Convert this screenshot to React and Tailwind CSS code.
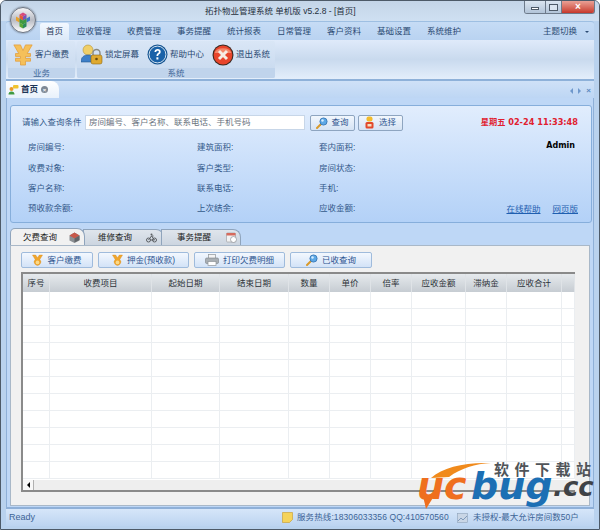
import React from 'react';

const font = { fontFamily: '"Liberation Sans", "Noto Sans CJK SC", sans-serif' };

const menus = ['应收管理', '收费管理', '事务提醒', '统计报表', '日常管理', '客户资料', '基础设置', '系统维护'];

const columns = [
  ['序号', 'w-[27px]'], ['收费项目', 'w-[102px]'], ['起始日期', 'w-[68px]'], ['结束日期', 'w-[69px]'],
  ['数量', 'w-[41px]'], ['单价', 'w-[41px]'], ['倍率', 'w-[41px]'], ['应收金额', 'w-[54px]'],
  ['滞纳金', 'w-[41px]'], ['应收合计', 'w-[55px]'], ['', 'w-[13px]'],
];

const info = [
  ['房间编号:', '建筑面积:', '套内面积:', 'h-[22px]'],
  ['收费对象:', '客户类型:', '房间状态:', 'h-[20px]'],
  ['客户名称:', '联系电话:', '手机:', 'h-[20px]'],
  ['预收款余额:', '上次结余:', '应收金额:', 'h-[20px]'],
];

const YuanIcon = () => (
  <svg width="20" height="23" viewBox="0 0 24 24" preserveAspectRatio="none">
    <path d="M1 2h8l3 6 3-6h8l-6 9h4v3h-6v2h6v3h-6v4H9v-4H3v-3h6v-2H3v-3h4z" fill="#f5c05a" stroke="#e39a35" strokeWidth="0.8" />
  </svg>
);

const LockUserIcon = () => (
  <svg width="22" height="22" viewBox="0 0 22 22">
    <circle cx="7" cy="6" r="5" fill="#f0cf68" stroke="#b49236" strokeWidth="0.6" />
    <path d="M0 18c0-5 3-7 7-7s6 2 6 7z" fill="#3d7fc8" stroke="#26598f" strokeWidth="0.6" />
    <path d="M12 11V9a3.5 3.5 0 0 1 7 0v2" fill="none" stroke="#8a8a80" strokeWidth="1.4" />
    <rect x="10" y="11" width="11" height="9" rx="2" fill="#dfa92f" stroke="#8f6a16" strokeWidth="0.6" />
    <circle cx="15.5" cy="15" r="1.3" fill="#6b4b0c" />
  </svg>
);

const HelpIcon = () => (
  <svg width="21" height="21" viewBox="0 0 21 21">
    <circle cx="10.5" cy="10.5" r="10" fill="#12528f" />
    <circle cx="10.5" cy="10.5" r="8.4" fill="#1a62a8" stroke="#e8f0f8" strokeWidth="0.9" />
    <path d="M7.4 8c.2-2 1.5-3 3.2-3 1.9 0 3.1 1.1 3.1 2.7 0 2.4-2.5 2.3-2.5 4.3H9.5c0-2.9 2.4-2.9 2.4-4.2 0-.6-.5-1.1-1.3-1.1-.8 0-1.3.5-1.4 1.3z" fill="#fff" />
    <rect x="9.4" y="13.3" width="2" height="2.2" fill="#fff" />
  </svg>
);

const ExitIcon = () => (
  <svg width="22" height="22" viewBox="0 0 22 22">
    <circle cx="11" cy="11" r="10.5" fill="#3a2a22" />
    <circle cx="11" cy="11" r="9.4" fill="#e8452c" />
    <path d="M2.5 9a8.7 6 0 0 1 17 0z" fill="#f4876a" />
    <path d="M7 7l4 4 4-4M7 15l4-4 4 4" fill="none" stroke="#f6ece4" strokeWidth="3" />
  </svg>
);

const SearchIcon = () => (
  <svg width="12" height="12" viewBox="0 0 12 12">
    <path d="M1 11l3.5-3.5" stroke="#d99a2b" strokeWidth="2" strokeLinecap="round" />
    <circle cx="7.5" cy="4.5" r="3.6" fill="#5ea9e6" stroke="#2e6fae" strokeWidth="0.8" />
    <circle cx="6.5" cy="3.5" r="1.2" fill="#d8eeff" />
  </svg>
);

const PersonIcon = () => (
  <svg width="9" height="13" viewBox="0 0 9 13">
    <rect x="1.5" y="0.5" width="6" height="5" rx="2" fill="#f3bc2c" />
    <rect x="0.5" y="6" width="8" height="6.5" rx="1.5" fill="#e2492a" />
    <rect x="2.5" y="8" width="4" height="2.5" fill="#f6e0c0" />
  </svg>
);

const MedalIcon = () => (
  <svg width="11" height="13" viewBox="0 0 12 13">
    <path d="M0.5 0.5h3.5l2 3 2-3h3.5l-3 5a3.6 3.6 0 1 1-5 0z" fill="#efa62e" stroke="#d98a1e" strokeWidth="0.4" />
    <circle cx="6" cy="8.6" r="2" fill="#f9d98a" />
  </svg>
);

const PrinterIcon = () => (
  <svg width="14" height="12" viewBox="0 0 14 12">
    <rect x="3.5" y="0.5" width="7" height="4" fill="#f4f4f4" stroke="#8f9499" strokeWidth="0.7" />
    <rect x="0.5" y="4" width="13" height="5.5" rx="1.2" fill="#a9afb4" stroke="#7c8287" strokeWidth="0.6" />
    <rect x="3" y="7.5" width="8" height="4" fill="#fff" stroke="#8f9499" strokeWidth="0.7" />
  </svg>
);

const TabHouse = () => (
  <svg width="11" height="11" viewBox="0 0 11 11">
    <path d="M5.5 0.5l5 3v5l-5 2.500-5-2.500v-5z" fill="#8b8f93" />
    <path d="M0.5 3.500l5 3 5-3-5-3z" fill="#c7584a" />
    <path d="M5.500 6.500v4l5-2.500v-4.500z" fill="#62666a" />
  </svg>
);

const TabBike = () => (
  <svg width="11" height="10" viewBox="0 0 11 10" fill="none" stroke="#5b5f63" strokeWidth="1">
    <circle cx="2.500" cy="7" r="2" />
    <circle cx="8.500" cy="7" r="2" />
    <path d="M2.500 7l3-4 3 4h-4M5.500 3h2" />
    <circle cx="5.500" cy="1.500" r="1" fill="#5b5f63" stroke="none" />
  </svg>
);

const TabCalendar = () => (
  <svg width="11" height="11" viewBox="0 0 11 11">
    <rect x="0.5" y="1" width="9" height="9" rx="1" fill="#f2f2f2" stroke="#a0a4a8" strokeWidth="0.7" />
    <rect x="0.5" y="1" width="9" height="2.500" fill="#d66a5c" />
    <circle cx="7.500" cy="7.500" r="3" fill="#fff" stroke="#8a8e92" strokeWidth="0.7" />
  </svg>
);

const Orb = () => (
  <div className="absolute left-[9px] top-[6px] flex h-[26px] w-[26px] items-center justify-center rounded-full border border-[#6d7480] bg-gradient-to-b from-[#f4f4f6] via-[#b9bcc4] to-[#ffffff] shadow-[0_0_2px_#56606e]">
    <svg width="16" height="17" viewBox="0 0 16 17">
      <path d="M8 0.500l3.500 2-3.500 2-3.500-2z" fill="#d84a7c" />
      <path d="M4.500 2.500l3.500 2v4l-3.500-2z" fill="#e25a3a" />
      <path d="M11.500 2.500l-3.500 2v4l3.500-2z" fill="#7a52b8" />
      <path d="M1 4.500l3.500 2v4L1 8.500z" fill="#e8a22e" />
      <path d="M15 4.500l-3.500 2v4l3.500-2z" fill="#3a78c8" />
      <path d="M8 8.500l3.500-2v4L8 12.500zM8 8.500l-3.500-2v4L8 12.500z" fill="#3f9a42" />
      <path d="M4.500 10.500L8 12.500v4l-3.500-2z" fill="#58a838" />
      <path d="M11.500 10.500L8 12.500v4l3.500-2z" fill="#2c8a5a" />
    </svg>
  </div>
);

const RibbonButton = ({ icon, label, className = '' }) => (
  <div className={`flex h-[27px] items-center gap-[2px] whitespace-nowrap text-[#2b4a72] ${className}`}>
    {icon}
    <span>{label}</span>
  </div>
);

const ToolButton = ({ icon, label, width }) => (
  <button className={`flex h-[16px] items-center justify-center gap-[4px] rounded-[2px] border border-[#9fbbdc] bg-gradient-to-b from-[#f3f8fe] to-[#d3e3f7] text-[#2f5590] ${width}`}>
    {icon}
    <span>{label}</span>
  </button>
);

export default function App() {
  return (
    <div style={font} className="relative flex h-[530px] w-[600px] flex-col overflow-hidden rounded-t-[6px] border border-[#4d5a68] bg-[#b9d2ee] text-[8.5px] leading-none">
      {/* Title bar */}
      <div className="flex h-[20px] shrink-0 items-center bg-gradient-to-b from-[#c4d5e8] to-[#cfe0f2]">
        <span className="ml-[204px] text-[8.5px] text-[#26303c]">拓扑物业管理系统 单机版 v5.2.8 - [首页]</span>
        <div className="ml-auto mr-[4px] flex h-[13px] self-start overflow-hidden rounded-b-[3px] border border-t-0 border-[#6d7a8a]">
          <div className="flex w-[20px] items-end justify-center bg-gradient-to-b from-[#dbe5f0] to-[#b2c4d8] pb-[3px]">
            <div className="h-[3px] w-[8px] border border-[#4e5a68] bg-white" />
          </div>
          <div className="flex w-[17px] items-center justify-center border-x border-[#6d7a8a] bg-gradient-to-b from-[#dbe5f0] to-[#b2c4d8]">
            <div className="h-[7px] w-[9px] border border-[#4e5a68] bg-[#dbe5f0]" />
          </div>
          <div className="flex w-[32px] items-center justify-center bg-gradient-to-b from-[#e9a095] to-[#c6352a] text-[10px] font-bold text-white">×</div>
        </div>
      </div>

      <Orb />

      {/* Menu tabs */}
      <div className="mx-[5px] flex h-[19px] shrink-0 items-end rounded-t-[3px] border-t border-[#9ebfe2] bg-gradient-to-b from-[#c6dcf5] to-[#b9d3f1] pl-[34px] pr-[4px] text-[#2b4a72]">
        <div className="flex h-[17px] w-[29px] items-center justify-center rounded-t-[2px] bg-gradient-to-b from-[#f2f8ff] to-[#dce9f8] text-[#1d3556]">首页</div>
        {menus.map((label) => (
          <div key={label} className="flex h-[17px] w-[50px] items-center justify-center">{label}</div>
        ))}
        <div className="ml-auto flex h-[17px] items-center gap-[8px]">
          <span>主题切换</span>
          <span className="mr-[1px] h-0 w-0 border-x-[2px] border-t-[2px] border-x-transparent border-t-[#2b4a72]" />
        </div>
      </div>

      {/* Ribbon */}
      <div className="mx-[5px] flex h-[41px] shrink-0 gap-[2px] border-b-2 border-[#8eb1d9] bg-gradient-to-b from-[#dfeafa] via-[#c9daee] to-[#e3eefb] px-[2px] pt-[1px]">
        <div className="flex h-[37px] w-[67px] flex-col rounded-[2px] bg-gradient-to-b from-[#d9e6f6] to-[#c6d8ee]">
          <RibbonButton className="pl-[5px]" icon={<YuanIcon />} label="客户缴费" />
          <div className="flex h-[10px] items-center justify-center rounded-b-[2px] bg-[#c0d4ec] text-[#44699a]">业务</div>
        </div>
        <div className="flex h-[37px] w-[198px] flex-col rounded-[2px] bg-gradient-to-b from-[#d9e6f6] to-[#c6d8ee]">
          <div className="flex">
            <RibbonButton className="w-[65px] pl-[4px]" icon={<LockUserIcon />} label="锁定屏幕" />
            <RibbonButton className="w-[65px] pl-[5px]" icon={<HelpIcon />} label="帮助中心" />
            <RibbonButton className="w-[65px] pl-[5px]" icon={<ExitIcon />} label="退出系统" />
          </div>
          <div className="flex h-[10px] items-center justify-center rounded-b-[2px] bg-[#c0d4ec] text-[#44699a]">系统</div>
        </div>
      </div>

      {/* Document tab strip */}
      <div className="mx-[5px] flex h-[17px] shrink-0 items-end justify-between bg-gradient-to-b from-[#cfe1f7] to-[#bdd6f4]">
        <div className="flex h-[17px] w-[53px] items-center gap-[2px] rounded-tr-[8px] bg-gradient-to-b from-[#ffffff] to-[#e8f1fb] pl-[2px] font-bold text-[#1d3556]">
          <svg width="11" height="11" viewBox="0 0 11 11">
            <circle cx="3.500" cy="5" r="2" fill="#e99a2a" />
            <path d="M0.500 10.500c0-2 1-3 3-3s3 1 3 3z" fill="#3f9a42" />
            <rect x="5" y="1" width="5.500" height="3.500" rx="1" fill="#f0c430" />
          </svg>
          <span>首页</span>
          <span className="ml-[1px] flex h-[7px] w-[7px] items-center justify-center rounded-full bg-[#7d8894] text-[6px] text-white">×</span>
        </div>
        <div className="mb-[3px] mr-[3px] flex items-center gap-[5px] text-[#5d88c0]">
          <span className="h-0 w-0 border-y-[3px] border-r-[3px] border-y-transparent border-r-[#6f98cc]" />
          <span className="h-0 w-0 border-y-[3px] border-l-[3px] border-y-transparent border-l-[#6f98cc]" />
          <span className="text-[8px] font-bold">×</span>
        </div>
      </div>

      {/* Page body */}
      <div className="mx-[5px] flex min-h-0 flex-1 flex-col border-x border-[#8fb0d8] bg-[#bed7f6] pl-[3px] pr-[1px] pt-[7px]">
        {/* Query panel */}
        <div className="h-[118px] shrink-0 rounded-[3px] border border-[#86aedb] bg-gradient-to-b from-[#e1edfd] to-[#b3d1f7] pl-[11px] pr-[13px] text-[#33598a]">
          <div className="flex h-[30px] items-center pt-[3px]">
            <span className="w-[63px]">请输入查询条件</span>
            <div className="flex h-[15px] w-[220px] items-center border border-[#c7d6e8] bg-white pl-[3px] text-[#6b7480]">房间编号、客户名称、联系电话、手机号码</div>
            <button className="ml-[5px] flex h-[16px] w-[45px] items-center justify-center gap-[3px] rounded-[2px] border border-[#8ea5c0] bg-gradient-to-b from-[#f2f7fd] to-[#d5e3f4] text-[#2f5590]">
              <SearchIcon /><span>查询</span>
            </button>
            <button className="ml-[3px] flex h-[16px] w-[45px] items-center justify-center gap-[5px] rounded-[2px] border border-[#8ea5c0] bg-gradient-to-b from-[#f2f7fd] to-[#d5e3f4] text-[#2f5590]">
              <PersonIcon /><span>选择</span>
            </button>
            <span className="ml-auto text-[8.2px] font-bold text-[#e0202f]" style={{ fontFamily: '"DejaVu Sans", "Noto Sans CJK SC", sans-serif' }}>星期五 02-24 11:33:48</span>
          </div>
          <div className="flex">
            <div className="flex flex-col pl-[6px]">
              {info.map(([a, b, c, h]) => (
                <div key={a} className={`flex items-center ${h}`}>
                  <span className="w-[169px]">{a}</span>
                  <span className="w-[122px]">{b}</span>
                  <span>{c}</span>
                </div>
              ))}
            </div>
            <div className="ml-auto flex flex-col items-end">
              <span className="mr-[3px] mt-[6px] text-[8px] font-bold text-black" style={{ fontFamily: '"DejaVu Sans", sans-serif' }}>Admin</span>
              <div className="mt-[55px] flex gap-[12px] text-[#1f5fb0] underline">
                <span>在线帮助</span>
                <span>网页版</span>
              </div>
            </div>
          </div>
        </div>

        {/* Sub tabs */}
        <div className="mt-[5px] flex h-[17px] shrink-0 items-end">
          <div className="z-10 flex h-[17px] w-[75px] items-center gap-[12px] rounded-tl-[5px] rounded-tr-[8px] border border-b-0 border-[#8fa4bc] bg-[#f1f1f1] pl-[12px] text-[#222]">
            <span>欠费查询</span><TabHouse />
          </div>
          <div className="-ml-[2px] flex h-[16px] w-[81px] items-center gap-[14px] rounded-tr-[8px] border border-b-0 border-[#8fa4bc] bg-gradient-to-b from-[#dfe5ec] to-[#ccd5e0] pl-[14px] text-[#222]">
            <span>维修查询</span><TabBike />
          </div>
          <div className="-ml-[3px] flex h-[16px] w-[80px] items-center gap-[15px] rounded-tr-[8px] border border-b-0 border-[#8fa4bc] bg-gradient-to-b from-[#dfe5ec] to-[#ccd5e0] pl-[15px] text-[#222]">
            <span>事务提醒</span><TabCalendar />
          </div>
        </div>

        {/* Tab content */}
        <div className="flex h-[261px] w-[580px] shrink-0 flex-col border border-[#a9b8c8] bg-[#f1f1f1] pl-[10px] pt-[6px]">
          <div className="flex h-[16px] shrink-0 gap-[5px]">
            <ToolButton icon={<MedalIcon />} label="客户缴费" width="w-[72px]" />
            <ToolButton icon={<MedalIcon />} label="押金(预收款)" width="w-[91px]" />
            <ToolButton icon={<PrinterIcon />} label="打印欠费明细" width="w-[91px]" />
            <ToolButton icon={<SearchIcon />} label="已收查询" width="w-[82px]" />
          </div>
          <div className="mt-[4px] flex h-[220px] w-[554px] flex-col border-2 border-r-0 border-[#8a8a8a] bg-white">
            <div className="flex h-[18px] shrink-0 bg-gradient-to-b from-[#e6eaed] to-[#c6ccd2] text-[#2c3238]">
              {columns.map(([label, w], i) => (
                <div key={i} className={`flex items-center justify-center border-r border-[#dfe3e7] ${w}`}>{label}</div>
              ))}
            </div>
            <div className="min-h-0 flex-1 overflow-hidden">
              {[...Array(11)].map((_, r) => (
                <div key={r} className="flex h-[17px] border-b border-[#ebeef1]">
                  {columns.map(([, w], i) => (
                    <div key={i} className={`border-r border-[#ebeef1] ${w}`} />
                  ))}
                </div>
              ))}
            </div>
            <div className="flex h-[10px] shrink-0 items-center bg-[#eeeeee]">
              <div className="flex h-[10px] w-[11px] items-center justify-center border-r border-[#b0b0b0] bg-[#f7f7f7]">
                <span className="h-0 w-0 border-y-[3px] border-r-[3px] border-y-transparent border-r-black" />
              </div>
            </div>
          </div>
        </div>
      </div>

      {/* Status bar */}
      <div className="mx-[5px] mb-[3px] flex h-[19px] shrink-0 items-center whitespace-nowrap border-t-2 border-[#8fb0d8] bg-gradient-to-b from-[#d6e6f9] to-[#bcd4f1] pl-[3px] text-[#3c6496]">
        <span className="w-[273px] text-[9px]">Ready</span>
        <svg width="11" height="11" viewBox="0 0 11 11">
          <path d="M0.500 0.500h10v7l-3 3h-7z" fill="#f5d35a" stroke="#c89a2a" strokeWidth="0.6" />
        </svg>
        <span className="ml-[4px] w-[160px] tracking-[0.1px]">服务热线:18306033356 QQ:410570560</span>
        <svg width="11" height="10" viewBox="0 0 11 10">
          <rect x="0.500" y="0.500" width="10" height="9" fill="#c9d6e6" stroke="#8ea2ba" strokeWidth="0.6" />
          <path d="M1 8l3-3 2 2 4-4" fill="none" stroke="#6f8cb0" strokeWidth="0.8" />
        </svg>
        <span className="ml-[5px]">未授权-最大允许房间数50户</span>
      </div>

      {/* Watermark */}
      <div className="pointer-events-none absolute left-[414px] top-[460px] h-[60px] w-[184px]">
        <svg className="absolute left-0 top-0" width="80" height="50" viewBox="0 0 80 50">
          <path d="M16 17C28 6 50 1 76 2 60 3 46 7 34 16z" fill="#f08a1c" />
          <path d="M8 35l3 13 8-13z" fill="#ef6f1e" />
        </svg>
        <span className="absolute left-[2px] top-[6px] text-[38px] font-bold italic leading-none text-[#ef6f1e]" style={{ fontFamily: '"DejaVu Sans", sans-serif' }}>uc</span>
        <span className="absolute left-[56px] top-[6px] text-[38px] font-bold italic leading-none text-[#1c6fb4]" style={{ fontFamily: '"DejaVu Sans", sans-serif' }}>bug</span>
        <span className="absolute left-[138px] top-[13px] text-[26px] font-bold italic leading-none text-[#3f4246]" style={{ fontFamily: '"DejaVu Sans", sans-serif' }}>.cc</span>
        <span className="absolute left-[79px] top-0 text-[15px] font-bold leading-none tracking-[5.5px] text-[#505459]" style={{ fontFamily: '"Noto Sans CJK SC", sans-serif' }}>软件下载站</span>
      </div>
    </div>
  );
}
